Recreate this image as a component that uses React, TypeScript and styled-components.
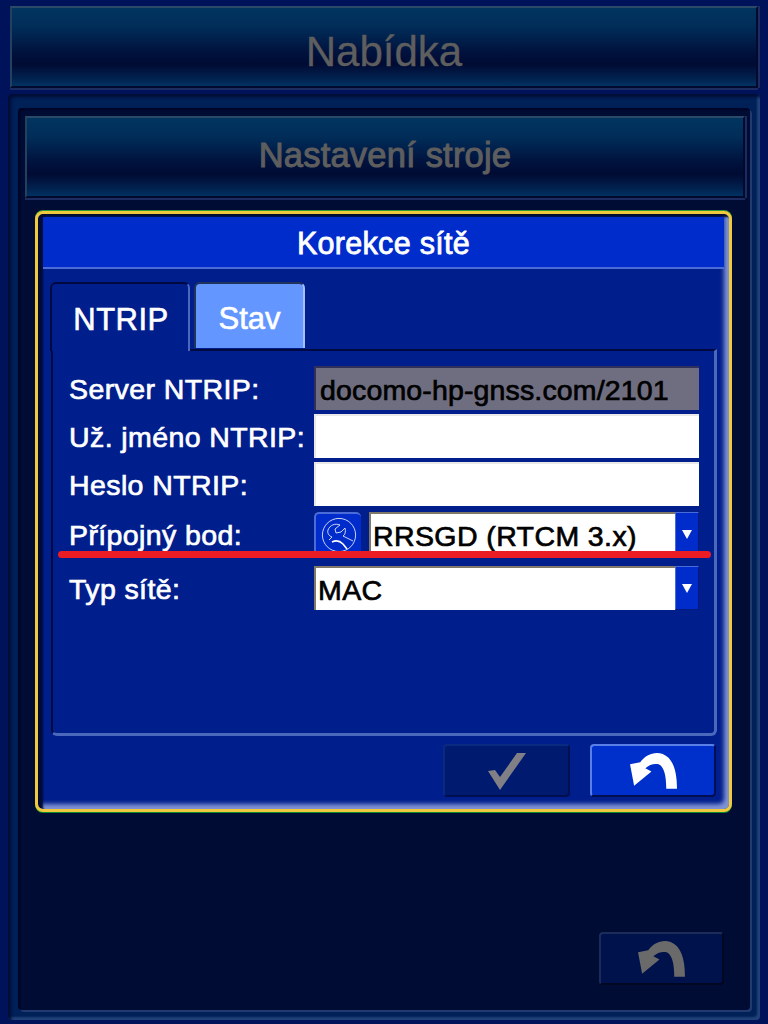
import React from "react";
import styled, { createGlobalStyle } from "styled-components";

const GlobalStyle = createGlobalStyle`
  html, body {
    margin: 0;
    padding: 0;
    background: #00135a;
    font-family: "Liberation Sans", Arial, sans-serif;
  }
  * { box-sizing: border-box; }
`;

// zakrivena sipka zpet
const BackIcon = ({ color, width }: { color: string; width: number }) => (
  <svg width={width} viewBox="0 0 48 37" fill={color}>
    <path d="M1 12 L5 33 L22 19 L16 16 C20 12 25 11 29 12 C34 14 36.5 22 36.5 36 L47 36 C47 18 43 6 33 2 C25 -1 16 3 11 10 Z" />
  </svg>
);

const CheckIcon = () => (
  <svg width="40" viewBox="0 0 40 38" fill="#7f7f85">
    <path d="M1 19 L13 38 L39 1 L30 1 L13 25 L8 18 Z" />
  </svg>
);

const WrenchIcon = () => (
  <svg width="36" height="36" viewBox="0 0 36 36" fill="none" stroke="#fff" strokeWidth="0.8">
    <circle cx="18" cy="18" r="16.6" />
    <path d="M7 13 C9 8 14 6 19 8 L14 12 L15 16 L20 15 L24 11 C25 15 24 18 22 19 L32 24" />
    <path d="M7 13 C6 16 8 19 11 20 L8 23" />
    <path d="M11 25 C15 23 19 24 22 27 L26 32" strokeWidth="1.6" />
  </svg>
);

const Select = ({ value }: { value: string }) => (
  <SelectBox>
    <SelectValue>{value}</SelectValue>
    <SelectArrow />
  </SelectBox>
);

const App = () => {
  return (
    <>
      <GlobalStyle />
      <Page>
        <TitleBar>Nabídka</TitleBar>
        <OuterPanel>
          <InnerPanel>
            <SubTitleBar>Nastavení stroje</SubTitleBar>
            <Dialog>
              <DialogHeader>Korekce sítě</DialogHeader>
              <DialogBody>
                <Tabs>
                  <ActiveTab>NTRIP</ActiveTab>
                  <IdleTab>Stav</IdleTab>
                </Tabs>
                <TabPanel>
                  <FormRow>
                    <Label>Server NTRIP:</Label>
                    <Field $readOnly>docomo-hp-gnss.com/2101</Field>
                  </FormRow>
                  <FormRow>
                    <Label>Už. jméno NTRIP:</Label>
                    <Field />
                  </FormRow>
                  <FormRow>
                    <Label>Heslo NTRIP:</Label>
                    <Field />
                  </FormRow>
                  <FormRow $top={2}>
                    <Label>Přípojný bod:</Label>
                    <FieldWithTool>
                      <ToolButton>
                        <WrenchIcon />
                      </ToolButton>
                      <Select value="RRSGD (RTCM 3.x)" />
                    </FieldWithTool>
                  </FormRow>
                  <FormRow $top={6}>
                    <Label>Typ sítě:</Label>
                    <Select value="MAC" />
                  </FormRow>
                  <RedLine />
                </TabPanel>
                <Footer>
                  <ActionButton $disabled>
                    <CheckIcon />
                  </ActionButton>
                  <ActionButton>
                    <BackIcon color="#fff" width={49} />
                  </ActionButton>
                </Footer>
              </DialogBody>
            </Dialog>
            <PageFooter>
              <DimButton>
                <BackIcon color="#6a6a6a" width={49} />
              </DimButton>
            </PageFooter>
          </InnerPanel>
        </OuterPanel>
      </Page>
    </>
  );
};

export default App;

const Page = styled.div`
  width: 768px;
  height: 1024px;
  overflow: hidden;
  padding: 6px 8px 4px;
  background: #00135a;
`;

const barBackground = `
  background: linear-gradient(
    to bottom,
    #013560 0%,
    #012c58 25%,
    #00113c 58%,
    #000b33 72%,
    #01214e 90%,
    #013262 100%
  );
  border-top: 2px solid #2a4a68;
  border-left: 2px solid #24405f;
  border-right: 2px solid #000a2c;
  border-bottom: 2px solid #000a2c;
  box-shadow: 0 2px 0 #1c2c60, 2px 0 0 #1c2c60;
  display: flex;
  align-items: center;
  justify-content: center;
  color: #5e5e5e;
`;

const TitleBar = styled.div`
  ${barBackground}
  height: 82px;
  margin: 0 2px 6px 2px;
  padding-top: 10px;
  font-size: 42px;
  -webkit-text-stroke: 0.3px #5e5e5e;
`;

const OuterPanel = styled.div`
  width: 752px;
  height: 926px;
  padding: 14px 10px 10px;
  border-radius: 4px;
  background: #002058;
  box-shadow: inset 3px 3px 3px #000d35, inset -3px -3px 2px #1f4278;
`;

const InnerPanel = styled.div`
  height: 902px;
  padding: 8px 5px 0 7px;
  border-radius: 4px;
  background: #000c33;
  box-shadow: inset 2px 2px 2px #000526, 2px 2px 0 #213a70;
`;

const SubTitleBar = styled.div`
  ${barBackground}
  height: 82px;
  padding-bottom: 3px;
  font-size: 34.5px;
  letter-spacing: 0.2px;
  -webkit-text-stroke: 1px #5e5e5e;
`;

const Dialog = styled.div`
  width: 697px;
  height: 601px;
  margin: 13px 0 0 10px;
  padding: 3px 5px 0;
  border: 3px solid #f0c93c;
  border-radius: 8px;
  background: #001e8c;
  box-shadow:
    0 -1px 0 #2f9a3a,
    0 1px 0 #0a8a2a,
    inset 5px 3px 2px #000b33,
    inset -5px -5px 4px #8094d4;
`;

const DialogHeader = styled.div`
  height: 52px;
  padding-top: 2px;
  display: flex;
  align-items: center;
  justify-content: center;
  color: #fff;
  font-size: 30.5px;
  letter-spacing: 0.3px;
  -webkit-text-stroke: 0.8px #fff;
  background: #002ccc;
  border-bottom: 2px solid #4a6bd8;
`;

const DialogBody = styled.div`
  padding: 13px 7px 0;
`;

const Tabs = styled.div`
  display: flex;
  gap: 4px;
`;

const ActiveTab = styled.div`
  position: relative;
  z-index: 1;
  width: 140px;
  height: 69px;
  margin-bottom: -2px;
  padding: 4px 0 0 2px;
  display: flex;
  align-items: center;
  justify-content: center;
  color: #fff;
  font-size: 31px;
  letter-spacing: 0.5px;
  -webkit-text-stroke: 0.6px #fff;
  background: #001e8c;
  border-top: 2px solid #000a40;
  border-left: 2px solid #000a40;
  border-right: 2px solid #4a68bc;
  border-radius: 6px 6px 0 0;
`;

const IdleTab = styled.div`
  width: 111px;
  height: 66px;
  padding-top: 5px;
  display: flex;
  align-items: center;
  justify-content: center;
  color: #fff;
  font-size: 31px;
  -webkit-text-stroke: 0.6px #fff;
  background: #6496ff;
  border-top: 2px solid #20345c;
  border-left: 2px solid #20345c;
  border-right: 2px solid #a3bdff;
  border-radius: 6px 6px 0 0;
`;

const TabPanel = styled.div`
  position: relative;
  width: 666px;
  height: 387px;
  margin-left: 1px;
  padding: 15px 16px 0 16px;
  display: flex;
  flex-direction: column;
  gap: 4px;
  background: #001e8c;
  border-top: 2px solid #000a40;
  border-left: 2px solid #000a40;
  border-right: 3px solid #4a68bc;
  border-bottom: 3px solid #4a68bc;
  border-radius: 0 0 6px 6px;
`;

const FormRow = styled.div<{ $top?: number }>`
  height: 44px;
  margin-top: ${(p) => p.$top ?? 0}px;
  display: grid;
  grid-template-columns: 245px 385px;
  align-items: center;
`;

const Label = styled.div`
  padding-top: 2px;
  color: #fff;
  font-size: 28.5px;
  letter-spacing: 0.4px;
  -webkit-text-stroke: 0.7px #fff;
  white-space: nowrap;
`;

const Field = styled.div<{ $readOnly?: boolean }>`
  height: 44px;
  padding: 2px 0 0 4px;
  display: flex;
  align-items: center;
  color: #000;
  font-size: 28.5px;
  letter-spacing: 0.15px;
  -webkit-text-stroke: 0.7px #000;
  white-space: nowrap;
  background: ${(p) => (p.$readOnly ? "#6e6e80" : "#fff")};
  border-top: 2px solid ${(p) => (p.$readOnly ? "#30305a" : "#e8e8e8")};
  border-left: 2px solid ${(p) => (p.$readOnly ? "#30305a" : "#e8e8e8")};
`;

const FieldWithTool = styled.div`
  display: flex;
  gap: 8px;
  height: 44px;
`;

const ToolButton = styled.div`
  width: 47px;
  flex: none;
  display: flex;
  align-items: center;
  justify-content: center;
  background: #002ccc;
  border-top: 2px solid #4a6bd8;
  border-left: 2px solid #4a6bd8;
  border-radius: 5px 5px 0 0;
`;

const SelectBox = styled.div`
  flex: 1;
  height: 44px;
  display: flex;
  background: #fff;
  border-top: 2px solid #807868;
  border-left: 2px solid #807868;
`;

const SelectValue = styled.div`
  flex: 1;
  padding: 2px 0 0 2px;
  display: flex;
  align-items: center;
  color: #000;
  font-size: 28.5px;
  letter-spacing: 0.4px;
  -webkit-text-stroke: 0.7px #000;
  white-space: nowrap;
`;

const SelectArrow = styled.div`
  width: 24px;
  margin-top: -2px;
  display: flex;
  align-items: center;
  justify-content: center;
  background: #002ccc;
  border-top: 1px solid #4a6bd8;
  border-left: 1px solid #4a6bd8;
  border-right: 1px solid #001a80;
  border-bottom: 1px solid #001a80;

  &::before {
    content: "";
    border-left: 5px solid transparent;
    border-right: 5px solid transparent;
    border-top: 9px solid #fff;
  }
`;

const RedLine = styled.div`
  position: absolute;
  left: 5px;
  top: 200px;
  width: 653px;
  height: 7px;
  border-radius: 4px;
  background: #ec1c24;
`;

const Footer = styled.div`
  width: 666px;
  margin-top: 8px;
  display: flex;
  justify-content: flex-end;
  gap: 20px;
`;

const ActionButton = styled.div<{ $disabled?: boolean }>`
  width: ${(p) => (p.$disabled ? 127 : 126)}px;
  height: 53px;
  display: flex;
  align-items: center;
  justify-content: center;
  border-radius: 4px;
  background: ${(p) => (p.$disabled ? "#001a70" : "#0030cc")};
  border-top: 2px solid ${(p) => (p.$disabled ? "#0a2a80" : "#5a80e8")};
  border-left: 2px solid ${(p) => (p.$disabled ? "#0a2a80" : "#5a80e8")};
  border-right: 2px solid #000f50;
  border-bottom: 2px solid #000f50;
`;

const PageFooter = styled.div`
  margin-top: 120px;
  display: flex;
  justify-content: flex-end;
  padding-right: 21px;
`;

const DimButton = styled.div`
  width: 125px;
  height: 53px;
  display: flex;
  align-items: center;
  justify-content: center;
  border-radius: 4px;
  background: #00124c;
  border-top: 2px solid #1c2c5a;
  border-left: 2px solid #1c2c5a;
  border-right: 2px solid #000722;
  border-bottom: 2px solid #000722;
`;
